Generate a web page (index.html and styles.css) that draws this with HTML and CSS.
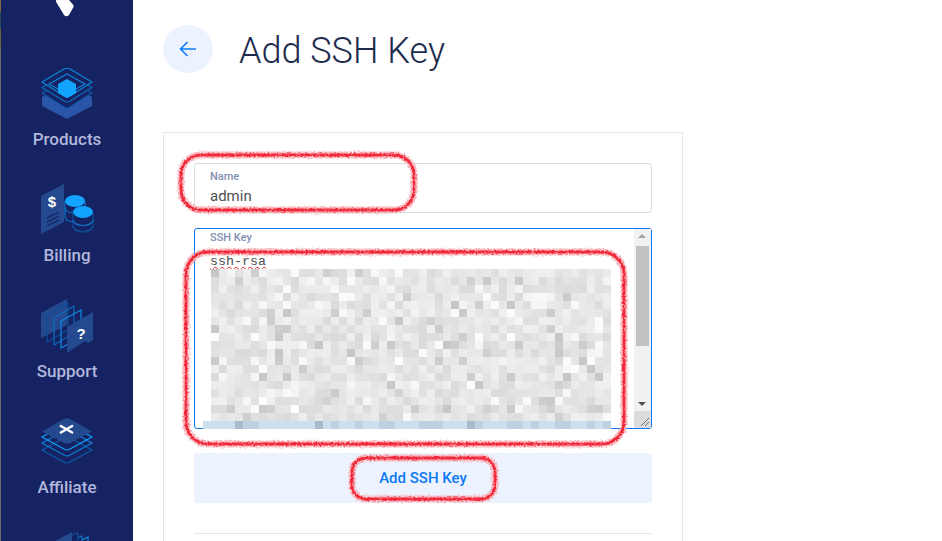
FILE: index.html
```html
<!DOCTYPE html>
<html lang="en">
<head>
<meta charset="utf-8">
<title>Add SSH Key</title>
<link rel="stylesheet" href="styles.css">
</head>
<body>
<div class="app">
  <nav class="sidebar">
    <div class="logo">
      <svg width="22" height="18" viewBox="0 0 22 18"><path d="M-1 0 L8 15 Q10.500 17.500 13 15 L17.500 7 Q18 5.500 16.500 4 L13 0 Z" fill="#fff"/></svg>
    </div>
    <a class="nav-item">
      <svg class="nav-icon" width="54" height="56" viewBox="0 0 54 56">
        <path d="M2 32 L27 19 L52 32 L52 41 L27 54 L2 41 Z" fill="#2a55a8"/>
        <g fill="#152363" stroke-width="1.200" stroke-linejoin="round">
          <path d="M2 28 L24 16 Q27 14 30 16 L52 28 L30 42 Q27 44 24 42 Z" stroke="#0d5ca8"/>
          <path d="M2 22.500 L24 10 Q27 8 30 10 L52 22.500 L30 36 Q27 38 24 36 Z" stroke="#0e6cbc"/>
          <path d="M2 17 L24 4 Q27 2.500 30 4 L52 17 L30 31 Q27 33 24 31 Z" stroke="#0f86d8"/>
          <path d="M9 19 L27 9 L45 19 L27 29 Z" stroke="#0f86d8"/>
        </g>
        <path d="M18 19 L27 14 L36 19 L36 28 L27 33 L18 28 Z" fill="#12a4ff"/>
      </svg>
      <span class="nav-label">Products</span>
    </a>
    <a class="nav-item">
      <svg class="nav-icon" width="54" height="56" viewBox="0 0 54 56">
        <path d="M1 15 L24 3 L24 41 L1 53 Z" fill="#24498f"/>
        <text x="12" y="26" class="glyph" text-anchor="middle">$</text>
        <path d="M7 37 L19 31 M7 41 L19 35 M7 45 L19 39" stroke="#152363" stroke-width="1.300"/>
        <g fill="none" stroke="#1079c8" stroke-width="1.200">
          <path d="M25 20 L25 36 A10 5.500 0 0 0 33 41"/>
          <path d="M25 27 A10 5.500 0 0 0 33 32"/>
          <path d="M45 20 L45 26"/>
        </g>
        <ellipse cx="35" cy="20" rx="10" ry="6" fill="#12a4ff"/>
        <path d="M33 31 L33 33 A10 5.500 0 0 0 53 33 L53 31" fill="#152363"/>
        <g fill="none" stroke-width="1.200">
          <path d="M33 32 L33 46 M53 32 L53 46" stroke="#0d4f96"/>
          <path d="M33 39 A10 5.500 0 0 0 53 39" stroke="#1079c8"/>
          <path d="M33 45 A10 5.500 0 0 0 53 45" stroke="#0d5ca8"/>
          <path d="M35 49 A10 5.500 0 0 0 51 49" stroke="#0d4585"/>
        </g>
        <ellipse cx="43" cy="31" rx="10" ry="6" fill="#12a4ff"/>
      </svg>
      <span class="nav-label">Billing</span>
    </a>
    <a class="nav-item">
      <svg class="nav-icon" width="54" height="56" viewBox="0 0 54 56">
        <path d="M1 16 L27 2 L27 28 L1 41 Z" fill="#24498f"/>
        <path d="M7 18 L28 6 L28 33 L7 45 Z" fill="none" stroke="#0e4f9c" stroke-width="1.200"/>
        <path d="M14 21 L34 9 L34 36 L14 48 Z" fill="none" stroke="#0e6cbc" stroke-width="1.200"/>
        <path d="M21 24 L41 13 L41 40 L21 51 Z" fill="none" stroke="#0f8ae0" stroke-width="1.200"/>
        <path d="M27 30 L53 15 L53 43 L48 46 L45 44 L27 56 Z" fill="#24498f"/>
        <text x="41" y="42" class="glyph" text-anchor="middle">?</text>
      </svg>
      <span class="nav-label">Support</span>
    </a>
    <a class="nav-item">
      <svg class="nav-icon" width="54" height="56" viewBox="0 0 54 56">
        <path d="M2 37 L24 25 Q27 23 30 25 L52 37 L30 49 Q27 51 24 49 Z" fill="none" stroke="#0d5ca8" stroke-width="1.200"/>
        <path d="M2 30 L24 18 Q27 16 30 18 L52 30 L30 42 Q27 44 24 42 Z" fill="none" stroke="#0f7fd4" stroke-width="1.200"/>
        <path d="M2 24 L24 12 Q27 10 30 12 L52 24 L30 36 Q27 38 24 36 Z" fill="none" stroke="#12a0f5" stroke-width="1.200"/>
        <path d="M3 18 L24 6 Q27 4.500 30 6 L51 18 Q52 18.500 51 19 L30 30 Q27 31.500 24 30 L3 19 Q2 18.500 3 18 Z" fill="#24498f"/>
        <path d="M20 12.500 L33 20 M33 12.500 L20 20" stroke="#fff" stroke-width="2.400"/>
      </svg>
      <span class="nav-label">Affiliate</span>
    </a>
    <a class="nav-item">
      <svg class="nav-icon" width="54" height="56" viewBox="0 0 54 56">
        <path d="M15 12 L32 3 L32 20 L15 20 Z" fill="#24498f"/>
        <path d="M32 6 L38 4 L38 14" fill="none" stroke="#0e4f9c" stroke-width="1.200"/>
        <path d="M38 9 L42 7 L42 14" fill="none" stroke="#0e6cbc" stroke-width="1.200"/>
        <path d="M42 11 L48 8 L48 16" fill="none" stroke="#0f8ae0" stroke-width="1.200"/>
      </svg>
    </a>
  </nav>

  <main class="content">
    <header class="page-head">
      <button class="back" type="button" aria-label="Back">
        <svg width="18" height="16" viewBox="0 0 18 16"><path d="M17 8 H2 M8.500 1 L1.500 8 L8.500 15" fill="none" stroke="#0a7cff" stroke-width="1.600"/></svg>
      </button>
      <h1 class="title">Add SSH Key</h1>
    </header>

    <section class="card">
      <div class="field field-name">
        <label class="field-label">Name</label>
        <div class="field-value">admin</div>
      </div>
      <div class="field field-key">
        <div class="key-body">
          <label class="field-label">SSH Key</label>
          <div class="key-text"><span class="misspelt">ssh-rsa</span></div>
        </div>
        <div class="scrollbar">
          <div class="sb-arrow sb-up"></div>
          <div class="sb-track"><div class="sb-thumb"></div></div>
          <div class="sb-arrow sb-down"></div>
          <div class="sb-corner">
            <svg width="17" height="17" viewBox="0 0 17 17"><path d="M7 15 L15 7 M11 15 L15 11" stroke="#6f6f6f" stroke-width="1"/></svg>
          </div>
        </div>
      </div>
      <button class="submit" type="button">Add SSH Key</button>
      <hr class="divider">
    </section>
  </main>
</div>

<svg id="mosaic" class="mosaic" width="408" height="160" viewBox="0 0 408 160" aria-hidden="true"></svg>

<svg class="marks" width="942" height="541" viewBox="0 0 942 541" aria-hidden="true">
  <defs>
    <filter id="rough" x="-5%" y="-5%" width="110%" height="110%">
      <feTurbulence type="fractalNoise" baseFrequency="0.5" numOctaves="2" seed="4"/>
      <feDisplacementMap in="SourceGraphic" scale="3.500" xChannelSelector="R" yChannelSelector="G"/>
      <feGaussianBlur stdDeviation="0.600"/>
    </filter>
  </defs>
  <g fill="none" filter="url(#rough)">
    <g stroke="#f8aab2" stroke-width="7" opacity="0.800">
      <rect x="181" y="155" width="233" height="55" rx="20"/>
      <rect x="186" y="252" width="438" height="192" rx="22"/>
      <rect x="352" y="458" width="143" height="41" rx="14"/>
    </g>
    <g stroke="#f02a3a" stroke-width="2.800">
      <rect x="181" y="155" width="233" height="55" rx="20"/>
      <rect x="186" y="252" width="438" height="192" rx="22"/>
      <rect x="352" y="458" width="143" height="41" rx="14"/>
    </g>
  </g>
</svg>
<script src="script.js"></script>
</body>
</html>
```

FILE: styles.css
```css
* { box-sizing: border-box; }
html, body { margin: 0; height: 100%; overflow: hidden; background: #fff; }
body { position: relative; font-family: Roboto, "Liberation Sans", sans-serif; }

.app { display: flex; height: 541px; overflow: hidden; }

.sidebar {
  width: 133px;
  flex: none;
  background: #152363;
  border-left: 1px solid #6b6b6b;
  border-image: linear-gradient(#7a6a3a 0 13px, #2a4a5a 13px 30px, #6a6040 30px 50px, #6b6b6b 50px) 1;
  display: flex;
  flex-direction: column;
  align-items: center;
  overflow: hidden;
}
.logo { height: 65px; flex: none; line-height: 0; }
.nav-item {
  flex: none;
  height: 116px;
  display: flex;
  flex-direction: column;
  align-items: center;
}
.nav-icon { display: block; flex: none; }
.nav-label {
  margin-top: 7px;
  font-size: 17px;
  line-height: 22px;
  font-weight: 500;
  color: #b2b7dc;
}
.glyph { fill: #fff; font-family: "Liberation Sans", sans-serif; font-size: 15px; font-weight: 700; }

.content { flex: 1; padding: 25px 0 0 30px; min-width: 0; }
.page-head { display: flex; align-items: center; gap: 26px; height: 50px; margin-bottom: 57px; }
.back {
  width: 50px;
  height: 48px;
  align-self: flex-start;
  border: 0;
  padding: 0;
  border-radius: 50%;
  background: #edf3fe;
  display: flex;
  align-items: center;
  justify-content: center;
}
.title {
  margin: 0;
  padding-top: 2px;
  font-size: 36px;
  font-weight: 300;
  line-height: 50px;
  color: #1e2b4d;
}

.card {
  width: 520px;
  height: 500px;
  border: 1px solid #e6e6e6;
  padding: 30px;
}
.field { width: 458px; border-radius: 3px; }
.field-name {
  height: 50px;
  border: 1px solid #dcdcdc;
  padding: 7px 15px 0;
  margin-bottom: 15px;
}
.field-label {
  display: block;
  font-size: 11px;
  line-height: 12px;
  font-weight: 500;
  color: #8290b2;
}
.field-value {
  margin-top: 3px;
  font-size: 15px;
  line-height: 20px;
  color: #4f4f4f;
}
.field-key {
  height: 201px;
  border: 1px solid #0a78f5;
  display: flex;
  margin-bottom: 24px;
}
.key-body { flex: 1; padding: 3px 15px 0; min-width: 0; }
.key-text {
  margin-top: 10px;
  font-family: "Liberation Mono", monospace;
  font-size: 13.333px;
  line-height: 16px;
  color: #4f4f4f;
}
.misspelt { text-decoration: underline wavy #e5262f 1.300px; text-underline-offset: 1px; }

.scrollbar {
  width: 17px;
  flex: none;
  background: #f1f1f1;
  display: flex;
  flex-direction: column;
}
.sb-arrow { height: 17px; flex: none; position: relative; }
.sb-up::after, .sb-down::after {
  content: "";
  position: absolute;
  left: 4px;
  width: 0;
  height: 0;
  border-left: 4px solid transparent;
  border-right: 4px solid transparent;
}
.sb-up::after { top: 5px; border-bottom: 4px solid #a3a3a3; }
.sb-down::after { top: 8px; border-top: 4px solid #505050; }
.sb-track { flex: 1; padding: 0 2px; }
.sb-thumb { height: 100px; background: #c1c1c1; }
.sb-corner { height: 17px; flex: none; background: #dcdcdc; line-height: 0; }

.submit {
  display: block;
  width: 458px;
  height: 50px;
  border: 0;
  border-radius: 3px;
  background: #edf3fe;
  font-family: inherit;
  font-size: 15px;
  font-weight: 500;
  color: #0a78f5;
  margin-bottom: 30px;
}
.divider { width: 458px; height: 1px; border: 0; margin: 0; background: #e6e6e6; }

.mosaic { position: absolute; left: 203px; top: 269px; }
.marks { position: absolute; left: 0; top: 0; pointer-events: none; }
```

FILE: script.js
```js
(function () {
  var svg = document.getElementById('mosaic');
  var NS = 'http://www.w3.org/2000/svg';
  var seed = 12345;
  function rnd() {
    seed = (seed * 1664525 + 1013904223) % 4294967296;
    return seed / 4294967296;
  }
  var cell = 8;
  for (var r = 0; r < 20; r++) {
    for (var c = 0; c < 51; c++) {
      if (c === 0 && r < 19) continue;
      var v = rnd();
      var g = v < 0.1 ? 198 + rnd() * 12 : v < 0.5 ? 218 + rnd() * 12 : v < 0.9 ? 230 + rnd() * 10 : 243 + rnd() * 10;
      g = Math.round(g);
      var fill = 'rgb(' + g + ',' + g + ',' + g + ')';
      if (r === 19) {
        var k = v < 0.12 ? 170 : v < 0.5 ? 192 : 206;
        fill = 'rgb(' + k + ',' + (k + 16) + ',' + Math.min(k + 32, 235) + ')';
      }
      var rect = document.createElementNS(NS, 'rect');
      rect.setAttribute('x', c * cell);
      rect.setAttribute('y', r * cell);
      rect.setAttribute('width', cell);
      rect.setAttribute('height', cell);
      rect.setAttribute('fill', fill);
      svg.appendChild(rect);
    }
  }
})();
```
